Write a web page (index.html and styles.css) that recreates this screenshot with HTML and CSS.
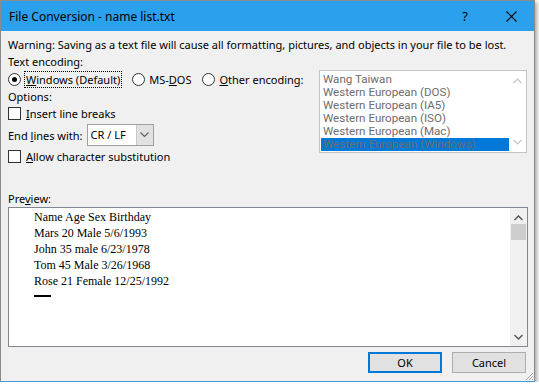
FILE: index.html
```html
<!DOCTYPE html>
<html lang="en">
  <head>
    <meta charset="UTF-8" />
    <title>File Conversion - name list.txt</title>
    <link rel="stylesheet" href="styles.css">
  </head>
  <body>
    <div class="window">
      <div class="title_bar">
        <span class="title">File Conversion - name list.txt</span>
        <span class="title_help">?</span>
        <span class="title_close">
          <svg width="11" height="11" viewBox="0 0 11 11"><path d="M0.5 0.5 L10.5 10.5 M10.5 0.5 L0.5 10.5" stroke="#000" stroke-width="1.1" fill="none"/></svg>
        </span>
      </div>

      <div class="content">
        <p class="warning">Warning: Saving as a text file will cause all formatting, pictures, and objects in your file to be lost.</p>

        <div class="upper">
          <div class="left_col">
            <div class="row label_row">Text encoding:</div>
            <div class="row radio_row">
              <label class="radio_item">
                <span class="radio checked"></span>
                <span class="focus"><u>W</u>indows (Default)</span>
              </label>
              <label class="radio_item">
                <span class="radio"></span>
                <span>MS-<u>D</u>OS</span>
              </label>
              <label class="radio_item">
                <span class="radio"></span>
                <span><u>O</u>ther encoding:</span>
              </label>
            </div>
            <div class="row label_row">Options:</div>
            <label class="row check_row">
              <span class="checkbox"></span>
              <span><u>I</u>nsert line breaks</span>
            </label>
            <div class="row select_row">
              <span>End <u>l</u>ines with:</span>
              <div class="select">
                <span class="select_value">CR / LF</span>
                <span class="select_button">
                  <svg width="9" height="6" viewBox="0 0 9 6"><path d="M0.5 0.5 L4.5 4.5 L8.5 0.5" stroke="#606060" stroke-width="1.1" fill="none"/></svg>
                </span>
              </div>
            </div>
            <label class="row check_row">
              <span class="checkbox"></span>
              <span><u>A</u>llow character substitution</span>
            </label>
          </div>

          <div class="listbox">
            <ul class="list_items">
              <li>Wang Taiwan</li>
              <li>Western European (DOS)</li>
              <li>Western European (IA5)</li>
              <li>Western European (ISO)</li>
              <li>Western European (Mac)</li>
              <li class="selected">Western European (Windows)</li>
            </ul>
            <div class="list_scroll">
              <svg width="9" height="6" viewBox="0 0 9 6"><path d="M0.5 5 L4.5 1 L8.5 5" stroke="#c4c4c4" stroke-width="1.2" fill="none"/></svg>
              <svg width="9" height="6" viewBox="0 0 9 6"><path d="M0.5 1 L4.5 5 L8.5 1" stroke="#c4c4c4" stroke-width="1.2" fill="none"/></svg>
            </div>
          </div>
        </div>

        <div class="preview_label">Pre<u>v</u>iew:</div>
        <div class="preview">
          <div class="preview_text">
            <p>Name Age Sex Birthday</p>
            <p>Mars 20 Male 5/6/1993</p>
            <p>John 35 male 6/23/1978</p>
            <p>Tom 45 Male 3/26/1968</p>
            <p>Rose 21 Female 12/25/1992</p>
            <span class="cursor_bar"></span>
          </div>
          <div class="preview_scroll">
            <svg width="9" height="6" viewBox="0 0 9 6"><path d="M0.5 5 L4.5 1 L8.5 5" stroke="#505050" stroke-width="1.3" fill="none"/></svg>
            <div class="thumb"></div>
            <div class="track"></div>
            <svg width="9" height="6" viewBox="0 0 9 6"><path d="M0.5 1 L4.5 5 L8.5 1" stroke="#505050" stroke-width="1.3" fill="none"/></svg>
          </div>
        </div>

        <div class="buttons">
          <button class="btn btn_default">OK</button>
          <button class="btn">Cancel</button>
        </div>
      </div>
      <svg class="grip" width="9" height="9" viewBox="0 0 9 9"><path d="M8 1 L1 8 M8 4 L4 8 M8 7 L7 8" stroke="#a0a0a0" stroke-width="1" fill="none"/></svg>
    </div>
  </body>
</html>
```

FILE: styles.css
```css
body {
  margin: 0;
  background-color: #ffffff;
  font-family: "Noto Sans", "Open Sans", sans-serif;
  font-size: 11px;
  color: #000000;

  --title_blue: #2ba1ee;
  --face: #f0f0f0;
  --edge: #8a8a8a;
  --accent: #0078d7;
}

.window {
  position: relative;
  width: 533px;
  height: 380px;
  background-color: var(--face);
  border: 1px solid var(--edge);
  border-bottom: 1px solid #3f9bdc;
  box-shadow: 2px 2px 4px rgba(0, 0, 0, 0.35);
  box-sizing: content-box;
}

.title_bar {
  height: 30px;
  display: flex;
  align-items: center;
  background-color: var(--title_blue);
  padding: 0 0 0 8px;
  font-size: 12px;
}

.title {
  flex: 1;
}

.title_help {
  width: 46px;
  text-align: center;
  font-size: 13px;
}

.title_close {
  width: 46px;
  display: flex;
  justify-content: center;
}

.content {
  padding: 5px 7px 0 7px;
}

.warning {
  margin: 0;
  height: 17px;
  line-height: 17px;
}

.upper {
  display: flex;
  justify-content: space-between;
  height: 114px;
}

.left_col {
  display: flex;
  flex-direction: column;
}

.row {
  display: flex;
  align-items: center;
}

.label_row {
  height: 17px;
}

.radio_row {
  height: 18px;
  gap: 11px;
}

.radio_item {
  display: flex;
  align-items: center;
  gap: 4px;
}

.radio {
  width: 11px;
  height: 11px;
  border: 1px solid #333333;
  border-radius: 50%;
  background-color: #ffffff;
  position: relative;
}

.radio.checked::after {
  content: "";
  position: absolute;
  left: 3px;
  top: 3px;
  width: 5px;
  height: 5px;
  border-radius: 50%;
  background-color: #000000;
}

.focus {
  outline: 1px dotted #000000;
  outline-offset: 0;
  padding: 0 1px;
}

.check_row {
  height: 17px;
  gap: 5px;
}

.checkbox {
  width: 11px;
  height: 11px;
  border: 1px solid #333333;
  background-color: #ffffff;
}

.select_row {
  height: 26px;
  gap: 4px;
}

.select {
  display: flex;
  width: 65px;
  height: 20px;
  border: 1px solid #a0a0a0;
  background-color: #ffffff;
}

.select_value {
  flex: 1;
  padding-left: 3px;
  line-height: 20px;
}

.select_button {
  width: 16px;
  display: flex;
  align-items: center;
  justify-content: center;
  background-color: #e1e1e1;
  border-left: 1px solid #c8c8c8;
}

.listbox {
  display: flex;
  width: 206px;
  height: 81px;
  margin: 17px 0 0 0;
  border: 1px solid #c4c4c4;
  background-color: #ffffff;
  color: #6d6d6d;
}

.list_items {
  flex: 1;
  margin: 0;
  padding: 2px 0 0 1px;
  list-style: none;
  font-family: Roboto, "Noto Sans", sans-serif;
  font-size: 11.6px;
}

.list_items li {
  height: 13px;
  line-height: 13px;
  padding-left: 2px;
}

.list_items .selected {
  background-color: var(--accent);
  color: #6d6d6d;
}

.list_scroll {
  width: 17px;
  display: flex;
  flex-direction: column;
  justify-content: space-between;
  align-items: center;
  padding: 7px 0 7px;
}

.preview_label {
  margin-top: 24px;
  height: 16px;
  line-height: 16px;
}

.preview {
  display: flex;
  width: 518px;
  height: 138px;
  border: 1px solid #828790;
  background-color: #ffffff;
}

.preview_text {
  flex: 1;
  padding: 1px 0 0 25px;
  font-family: "Liberation Serif", serif;
  font-size: 12px;
}

.preview_text p {
  margin: 0;
  height: 16px;
  line-height: 16px;
}

.cursor_bar {
  display: block;
  width: 17px;
  height: 2px;
  margin-top: 6px;
  background-color: #000000;
}

.preview_scroll {
  width: 17px;
  display: flex;
  flex-direction: column;
  align-items: center;
  padding: 7px 0 6px;
  background-color: #f0f0f0;
}

.thumb {
  width: 15px;
  height: 16px;
  margin-top: 3px;
  background-color: #cdcdcd;
}

.track {
  flex: 1;
}

.buttons {
  display: flex;
  justify-content: flex-end;
  gap: 10px;
  padding: 5px 1px 0 0;
}

.btn {
  width: 74px;
  height: 21px;
  font-family: inherit;
  font-size: 11px;
  background-color: #e1e1e1;
  border: 1px solid #adadad;
  padding: 0;
}

.btn_default {
  border: 2px solid var(--accent);
}

.grip {
  position: absolute;
  right: 0;
  bottom: 0;
}
```
